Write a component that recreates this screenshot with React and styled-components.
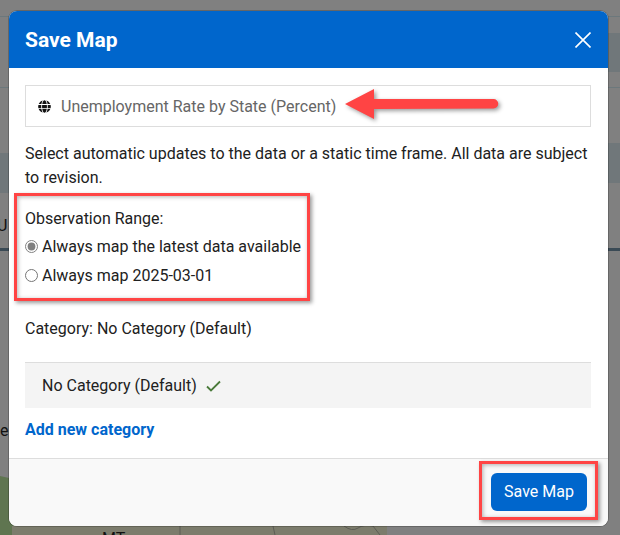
import React from 'react';
import styled, { createGlobalStyle } from 'styled-components';
import { FaGlobe } from 'react-icons/fa';

const GlobalStyle = createGlobalStyle`
  html, body {
    margin: 0;
    padding: 0;
    background: #808080;
  }
  * { box-sizing: border-box; }
`;

const Page = styled.div`
  position: relative;
  width: 620px;
  height: 535px;
  overflow: hidden;
  background: #808080;
  font-family: Roboto, "Liberation Sans", sans-serif;
  font-size: 16px;
  color: #212121;
  padding: 11px 12px 9px 9px;
`;

// dimmed page behind the dialog, only slivers of it show
const Backdrop = styled.svg`
  position: absolute;
  inset: 0;
  width: 620px;
  height: 535px;
  font-size: 16px;
`;

const Modal = styled.div`
  position: relative;
  height: 515px;
  display: flex;
  flex-direction: column;
  background: #fff;
  border-radius: 8px;
  overflow: hidden;
  box-shadow: 0 0 0 1px rgba(0, 0, 0, 0.2);
`;

const Header = styled.header`
  flex: none;
  height: 57px;
  background: #0066cc;
  color: #fff;
  display: flex;
  align-items: center;
  justify-content: space-between;
  padding: 1px 17px 0 16px;
`;

const Title = styled.h2`
  margin: 0;
  font-size: 21px;
  font-weight: 700;
`;

const CloseIcon = styled.svg`
  display: block;
  width: 16px;
  height: 16px;
`;

const Body = styled.div`
  flex: 1;
  padding: 17px 17px 0 16px;
`;

const NameBox = styled.div`
  height: 42px;
  border: 1px solid #ddd;
  display: flex;
  align-items: center;
  gap: 10px;
  padding-left: 12px;
  color: #666;
`;

const Intro = styled.p`
  margin: 15px 0 0;
  line-height: 24px;
`;

const RangeGroup = styled.div`
  margin-top: 17px;
  display: flex;
  flex-direction: column;
`;

const RangeLabel = styled.div`
  line-height: 24px;
  margin-bottom: 1px;
`;

const RadioRow = styled.label`
  display: flex;
  align-items: center;
  height: 29px;
  gap: 4px;
`;

const Radio = styled.input`
  appearance: auto;
  margin: 0;
  width: 13px;
  height: 13px;
  accent-color: #808080;
`;

const CategoryLabel = styled.div`
  margin-top: 27px;
  line-height: 24px;
`;

const CategoryRow = styled.div`
  margin-top: 21px;
  height: 46px;
  background: #f4f4f4;
  border-top: 1px solid #ddd;
  display: flex;
  align-items: center;
  gap: 9px;
  padding-left: 17px;
`;

const CheckIcon = styled.svg`
  display: block;
  width: 15px;
  height: 12px;
`;

const AddLink = styled.a`
  display: block;
  margin-top: 10px;
  line-height: 24px;
  color: #0066cc;
  font-weight: 700;
`;

const Footer = styled.footer`
  flex: none;
  height: 68px;
  background: #f9f9f9;
  border-top: 1px solid #ddd;
  display: flex;
  justify-content: flex-end;
  padding: 14px 21px 0 0;
`;

const SaveButton = styled.button`
  width: 96px;
  height: 38px;
  border: 0;
  border-radius: 6px;
  padding: 0 0 2px;
  background: #0066cc;
  color: #fff;
  font: inherit;
`;

const Callout = styled.div`
  position: absolute;
  left: ${(p) => p.$x}px;
  top: ${(p) => p.$y}px;
  width: ${(p) => p.$w}px;
  height: ${(p) => p.$h}px;
  border: 3px solid #ff4444;
  box-shadow: 2px 2px 4px rgba(0, 0, 0, 0.4), inset 1px 1px 4px rgba(0, 0, 0, 0.3);
  pointer-events: none;
`;

const Arrow = styled.svg`
  position: absolute;
  left: 340px;
  top: 84px;
  width: 165px;
  height: 42px;
  filter: drop-shadow(2px 2px 2px rgba(0, 0, 0, 0.4));
`;

export default function App() {
  return (
    <Page>
      <GlobalStyle />
      <Backdrop viewBox="0 0 620 535">
        <path d="M0 153H9V193H0ZM608 33H620V72H608ZM608 143H620V183H608Z" fill="#70777a" />
        <path d="M0 16.500H620M0 87.500H620" stroke="#6c787c" />
        <path d="M0 249.500H620" stroke="#3a4a55" strokeWidth="3" />
        <path d="M0 476L9 478L30 535H0Z" fill="#5f7550" />
        <path d="M12 526H387V535H12Z" fill="#7c7c6c" />
        <path d="M180 526V535M273 526L275 535M344 526Q352 532 358 528T373 526L380 535" stroke="#5d5d55" fill="none" />
        <text x="-3" y="231" fill="#111">U</text>
        <text x="0" y="436" fill="#111">e</text>
        <text x="102" y="544" fill="#111">MT</text>
        <text x="598" y="115" fill="#1c3a5c">R</text>
      </Backdrop>

      <Modal>
        <Header>
          <Title>Save Map</Title>
          <CloseIcon viewBox="0 0 16 16">
            <path d="M0.500 0.500L15.500 15.500M15.500 0.500L0.500 15.500" stroke="#fff" strokeWidth="1.6" fill="none" />
          </CloseIcon>
        </Header>
        <Body>
          <NameBox>
            <FaGlobe size={13} color="#111" />
            <span>Unemployment Rate by State (Percent)</span>
          </NameBox>
          <Intro>
            Select automatic updates to the data or a static time frame. All data are subject to revision.
          </Intro>
          <RangeGroup>
            <RangeLabel>Observation Range:</RangeLabel>
            <RadioRow>
              <Radio type="radio" name="range" defaultChecked />
              Always map the latest data available
            </RadioRow>
            <RadioRow>
              <Radio type="radio" name="range" />
              Always map 2025-03-01
            </RadioRow>
          </RangeGroup>
          <CategoryLabel>Category: No Category (Default)</CategoryLabel>
          <CategoryRow>
            No Category (Default)
            <CheckIcon viewBox="0 0 15 12">
              <path d="M1 6.500L5 10.500L14 1.500" stroke="#4a7a3a" strokeWidth="1.8" fill="none" />
            </CheckIcon>
          </CategoryRow>
          <AddLink>Add new category</AddLink>
        </Body>
        <Footer>
          <SaveButton>Save Map</SaveButton>
        </Footer>
      </Modal>

      <Arrow viewBox="0 0 165 42">
        <path
          d="M5 20L34 5V15L153.500 15A4.500 4.500 0 0 1 153.500 24.500L34 25V35Z"
          fill="#ff4444"
        />
      </Arrow>
      <Callout $x={14} $y={193} $w={296} $h={108} />
      <Callout $x={479} $y={461} $w={119} $h={59} />
    </Page>
  );
}
